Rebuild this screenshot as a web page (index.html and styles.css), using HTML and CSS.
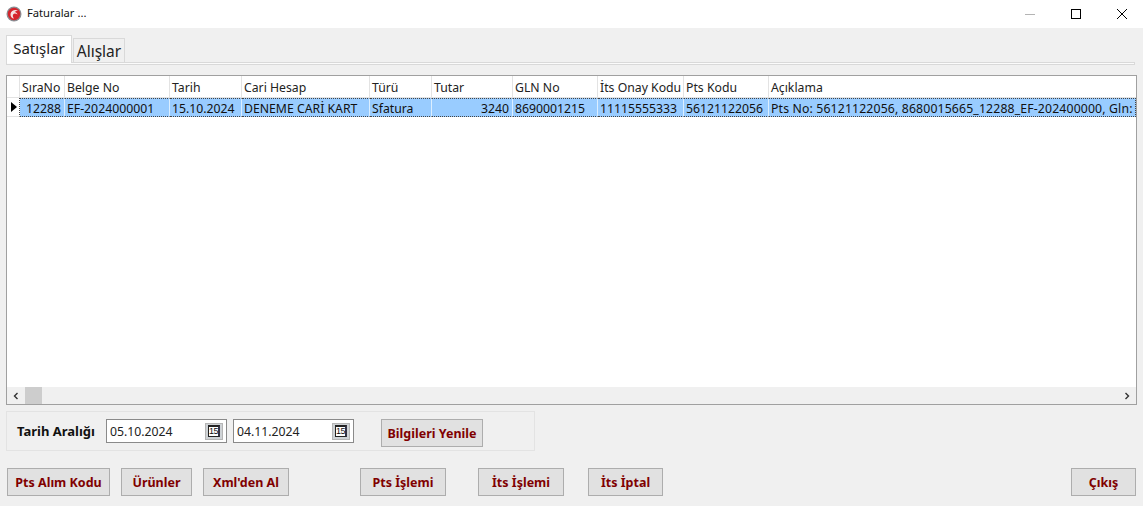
FILE: index.html
```html
<!DOCTYPE html>
<html lang="tr">
<head>
<meta charset="utf-8">
<title>Faturalar ...</title>
<link rel="stylesheet" href="styles.css">
</head>
<body>
<div class="window">
  <header class="titlebar">
    <svg class="app-icon" width="16" height="16" viewBox="0 0 16 16"><circle cx="8" cy="8" r="7.500" fill="#8a8f94"/><circle cx="8" cy="8" r="6.200" fill="#d5242c"/><path d="M12 4.500C9 3 5 4.500 4.500 8c-.3 2.500 1.500 4.500 3.500 4.500-1.500-1.500-1.500-3.500-.5-4.500 1-1 2.500-.5 4 .5-.5-1.500-1.500-2.500-3-2.500 1-.8 2.500-1.200 3.500-1.500z" fill="#f6e3e3"/></svg>
    <span class="title">Faturalar ...</span>
    <div class="controls">
      <svg width="12" height="12" viewBox="0 0 12 12"><path d="M1 6.500h10" stroke="#b4b4b4" fill="none"/></svg>
      <svg width="12" height="12" viewBox="0 0 12 12"><rect x="1.500" y="1.500" width="9" height="9" stroke="#000" fill="none"/></svg>
      <svg width="12" height="12" viewBox="0 0 12 12"><path d="M1 1l10 10M11 1L1 11" stroke="#000" fill="none"/></svg>
    </div>
  </header>

  <nav class="tabs">
    <div class="tab tab-active">Satışlar</div>
    <div class="tab">Alışlar</div>
  </nav>
  <div class="tab-rule"></div>

  <section class="grid-box">
    <div class="grid-row grid-head">
      <div class="cell ind"></div>
      <div class="cell">SıraNo</div><div class="cell">Belge No</div><div class="cell">Tarih</div><div class="cell">Cari Hesap</div><div class="cell">Türü</div><div class="cell">Tutar</div><div class="cell">GLN No</div><div class="cell">İts Onay Kodu</div><div class="cell">Pts Kodu</div><div class="cell">Açıklama</div>
    </div>
    <div class="grid-row grid-data">
      <div class="cell ind"><span class="arrow"></span></div>
      <div class="cell num">12288</div><div class="cell">EF-2024000001</div><div class="cell">15.10.2024</div><div class="cell">DENEME CARİ KART</div><div class="cell">Sfatura</div><div class="cell num">3240</div><div class="cell">8690001215</div><div class="cell">11115555333</div><div class="cell">56121122056</div><div class="cell note">Pts No: 56121122056, 8680015665_12288_EF-202400000, Gln:</div>
    </div>
    <div class="grid-empty"></div>
    <div class="hscroll">
      <svg class="sb-arrow" width="8" height="8" viewBox="0 0 8 8"><path d="M5.500 1L2.500 4l3 3" stroke="#333" stroke-width="1.400" fill="none"/></svg>
      <div class="thumb"></div>
      <svg class="sb-arrow sb-right" width="8" height="8" viewBox="0 0 8 8"><path d="M2.500 1l3 3-3 3" stroke="#333" stroke-width="1.400" fill="none"/></svg>
    </div>
  </section>

  <section class="date-panel">
    <label class="date-label">Tarih Aralığı</label>
    <div class="date"><span>05.10.2024</span><span class="cal"><span class="cal-face">15</span></span></div>
    <div class="date"><span>04.11.2024</span><span class="cal"><span class="cal-face">15</span></span></div>
    <button class="btn btn-refresh">Bilgileri Yenile</button>
  </section>

  <footer class="actions">
    <button class="btn w-alim">Pts Alım Kodu</button>
    <button class="btn w-urun">Ürünler</button>
    <button class="btn w-xml">Xml'den Al</button>
    <button class="btn w-pts">Pts İşlemi</button>
    <button class="btn w-its">İts İşlemi</button>
    <button class="btn w-iptal">İts İptal</button>
    <button class="btn w-cikis">Çıkış</button>
  </footer>
</div>
</body>
</html>
```
FILE: styles.css
```css
* { box-sizing: border-box; }
html, body { margin: 0; padding: 0; }
body { width: 1143px; height: 506px; overflow: hidden; font-family: "Noto Sans", Tahoma, sans-serif; font-size: 12.250px; color: #000; }
.window { width: 1143px; height: 506px; background: #f0f0f0; display: flex; flex-direction: column; }

.titlebar { height: 28px; background: #fff; display: flex; align-items: center; padding-left: 6px; flex: none; }
.app-icon { margin-right: 5px; }
.title { font-size: 11.200px; color: #111; line-height: 14px; margin-top: -2px; }
.controls { margin-left: auto; display: flex; gap: 34px; padding-right: 15px; }

.tabs { display: flex; align-items: flex-end; height: 34px; padding: 0 0 0 6px; flex: none; position: relative; }
.tab { height: 24px; width: 52px; margin-left: 1px; background: #f0f0f0; border: 1px solid #d9d9d9; border-bottom: 0; font-family: "Noto Sans", sans-serif; font-size: 15.500px; line-height: 24px; text-align: center; color: #222; }
.tab-active { width: 66px; height: 28px; margin-left: 0; background: #fff; line-height: 25px; margin-bottom: -1px; position: relative; z-index: 1; font-size: 15px; }
.tab-rule { height: 3px; margin: 0 8px 0 6px; background: #fbfbfb; border: 1px solid #d9d9d9; flex: none; }

.grid-box { margin: 10px 6px 0 6px; height: 330px; background: #fff; border: 1px solid #a0a0a0; display: flex; flex-direction: column; flex: none; width: 1131px; }
.grid-row { display: grid; grid-template-columns: 13px 45px 105px 72px 128px 62px 81px 85px 86px 85px 1fr; flex: none; }
.cell { padding: 0 2px; white-space: nowrap; overflow: hidden; border-right: 1px solid #e3e3e3; color: #222; }
.cell:last-child { border-right: 0; }
.grid-head { height: 22px; line-height: 23px; }
.grid-head .cell { border-bottom: 1px solid #e3e3e3; }
.grid-data { height: 19px; line-height: 19px; }
.grid-data .cell { background: #99ccff; border-top: 1px dotted #444; border-bottom: 1px dotted #444; border-right: 1px solid #dbeeff; color: #111; }
.grid-data .cell.ind { background: #fff; border-top: 0; border-bottom: 1px solid #e3e3e3; border-right: 1px dotted #444; display: flex; align-items: center; padding-left: 4px; }
.grid-data .cell:last-child { border-right: 1px dotted #444; }
.note { letter-spacing: .15px; }
.num { text-align: right; }
.grid-data .num { padding-right: 3px; }
.arrow { width: 0; height: 0; border-left: 6px solid #000; border-top: 5px solid transparent; border-bottom: 5px solid transparent; }
.grid-empty { flex: 1; }
.hscroll { height: 17px; background: #f0f0f0; display: flex; align-items: center; flex: none; }
.sb-arrow { margin-left: 5px; flex: none; }
.thumb { width: 17px; height: 17px; background: #cdcdcd; margin-left: 5px; }
.sb-right { margin-left: auto; margin-right: 5px; }

.date-panel { margin: 6px 0 0 6px; width: 529px; height: 40px; border: 1px solid #e3e3e3; display: flex; align-items: flex-start; padding-top: 7px; flex: none; }
.date-label { font-weight: 700; font-size: 13px; color: #111; margin-left: 10px; width: 89px; padding-top: 3px; white-space: nowrap; }
.date { width: 121px; height: 24px; margin-right: 6px; background: #fff; border: 1px solid #8a8a8a; display: flex; align-items: center; justify-content: space-between; padding: 0 3px 0 3px; color: #222; }
.cal { width: 18px; height: 17px; background: #cfd3d6; border: 1px solid #b5b5b5; display: flex; align-items: center; justify-content: center; }
.cal-face { width: 12px; height: 12px; background: #fff; border: 1px solid #222; border-top-width: 2px; border-right: 2px solid #334; font-family: "Liberation Sans", sans-serif; font-size: 9px; line-height: 9px; text-align: center; overflow: hidden; color: #111; letter-spacing: -.5px; }

.btn { height: 28px; padding: 0; background: #e1e1e1; border: 1px solid #adadad; font-family: "Noto Sans", Tahoma, sans-serif; font-weight: 700; font-size: 12.500px; color: #800000; white-space: nowrap; }
.btn-refresh { width: 102px; margin-left: 21px; }
.actions { display: flex; align-items: center; margin-top: 17px; padding-left: 7px; height: 28px; flex: none; }
.w-alim { width: 103px; }
.w-urun { width: 71px; margin-left: 11px; }
.w-xml { width: 86px; margin-left: 11px; }
.w-pts { width: 86px; margin-left: 71px; }
.w-its { width: 86px; margin-left: 32px; }
.w-iptal { width: 75px; margin-left: 24px; }
.w-cikis { width: 65px; margin-left: 408px; }
```
